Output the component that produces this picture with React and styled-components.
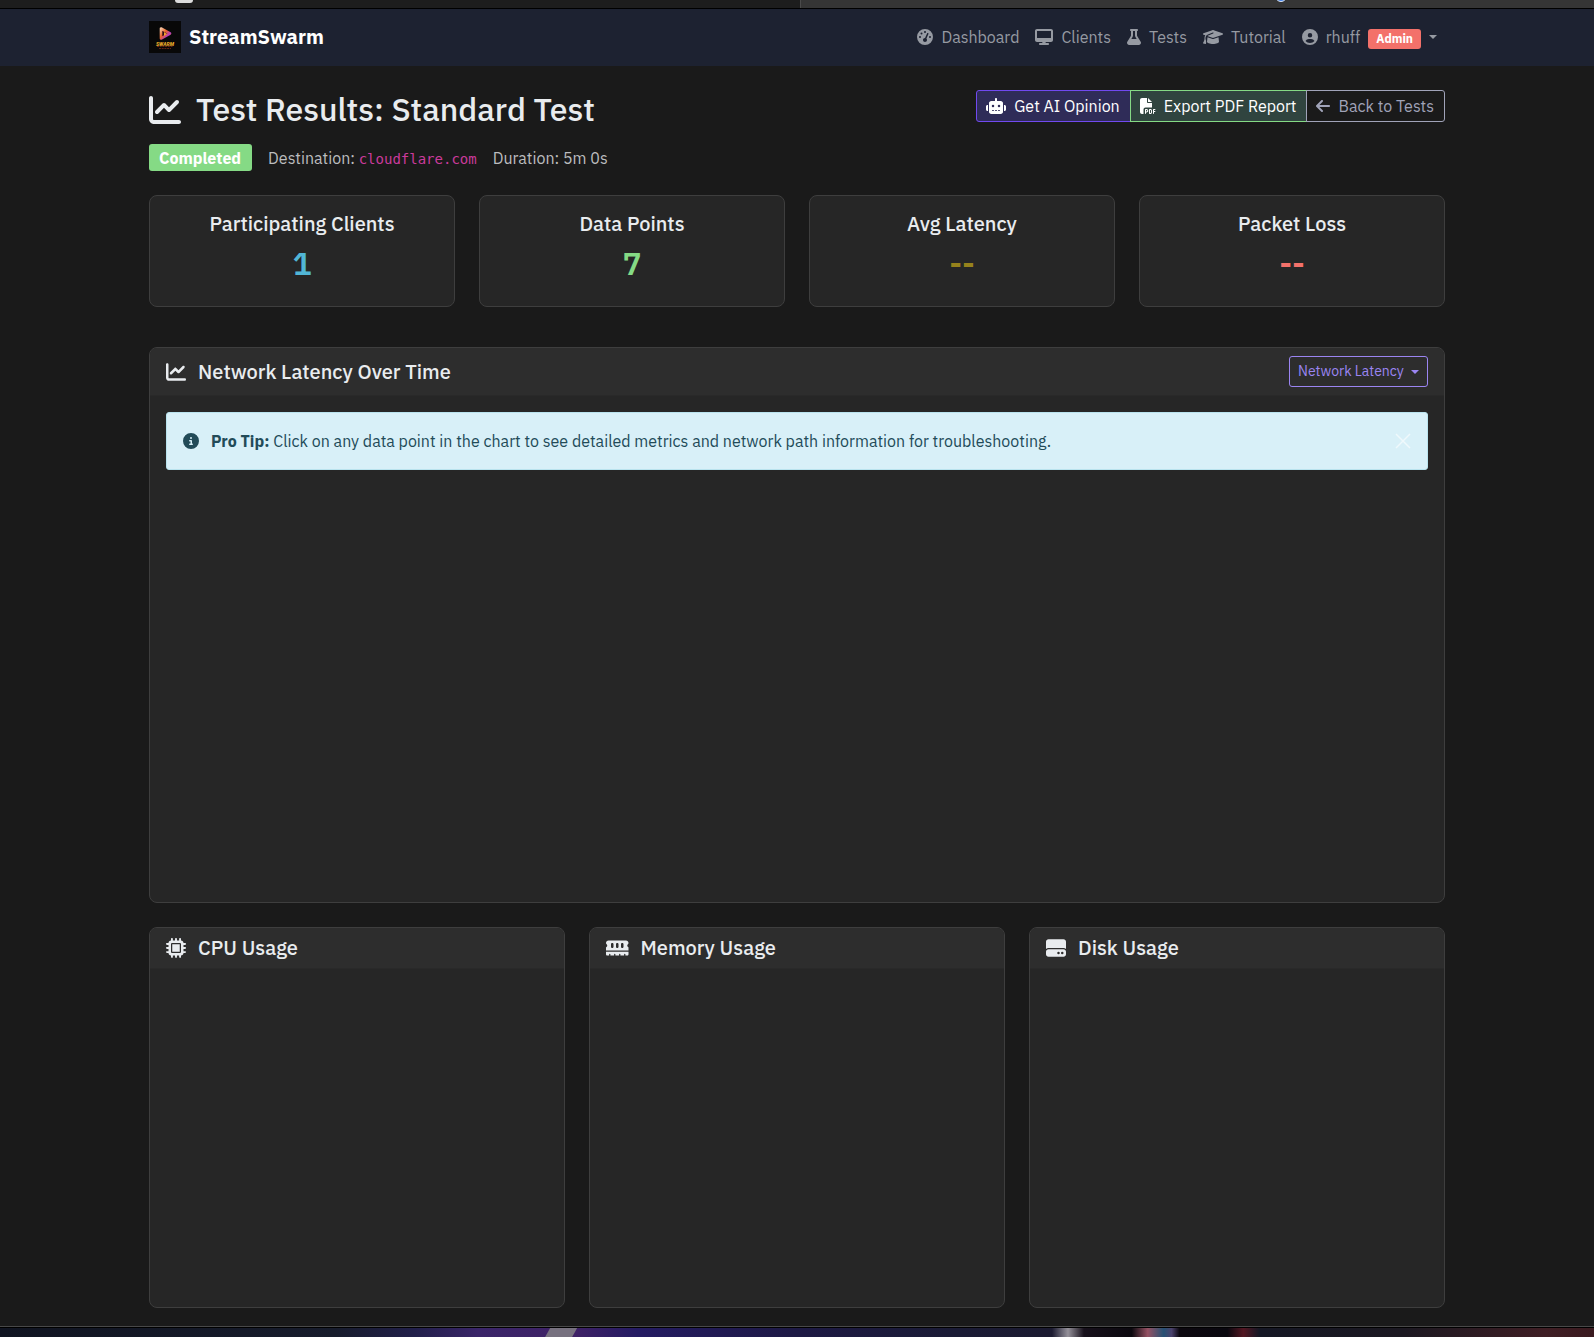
import React from "react";
import styled, { createGlobalStyle, css } from "styled-components";
import {
  FaArrowLeft,
  FaChartLine,
  FaCircleInfo,
  FaCircleUser,
  FaDesktop,
  FaFilePdf,
  FaFlask,
  FaGaugeHigh,
  FaGraduationCap,
  FaHardDrive,
  FaMemory,
  FaMicrochip,
  FaRobot,
} from "react-icons/fa6";

const GlobalStyle = createGlobalStyle`
  *, *::before, *::after { box-sizing: border-box; }
  body {
    margin: 0;
    background: #1a1a1a;
    color: #e9ecef;
    font-family: "IBM Plex Sans", Roboto, "Liberation Sans", sans-serif;
    font-size: 16px;
    line-height: 24px;
  }
  h1, h2, p { margin: 0; }
  button, select { font: inherit; cursor: pointer; }
  svg { display: block; flex: none; }
  svg[viewBox="0 0 448 512"] { width: 0.875em; }
  svg[viewBox="0 0 576 512"] { width: 1.125em; }
  svg[viewBox="0 0 640 512"] { width: 1.25em; }
`;

const Page = styled.div`
  display: flex;
  flex-direction: column;
  min-height: 100vh;
`;

const WindowEdge = styled.div`
  display: grid;
  grid-template-columns: 800px 1fr;
  height: 9px;
  border-bottom: 1px solid #000;
`;

const EdgePart = styled.div`
  background: ${(p) => p.$color};
  padding-left: ${(p) => p.$inset}px;
  border-left: ${(p) => (p.$divided ? "1px solid #4a4a4a" : "none")};
  overflow: hidden;
`;

const NavBar = styled.nav`
  background: #1d2231;
  padding: 12px 0 13px;
`;

const Container = styled.div`
  width: 100%;
  max-width: 1320px;
  margin: 0 auto;
  padding: 0 12px;
`;

const NavRow = styled(Container)`
  display: flex;
  align-items: center;
  justify-content: space-between;
`;

const Brand = styled.a`
  display: flex;
  align-items: center;
  gap: 8px;
  color: #fff;
  font-size: 20px;
  font-weight: 700;
  line-height: 32px;
  text-decoration: none;
`;

const NavLinks = styled.div`
  display: flex;
  align-items: center;
  gap: 16px;
  padding-right: 8px;
`;

const navItem = css`
  display: flex;
  align-items: center;
  gap: 8px;
  color: #969aa2;
  text-decoration: none;
`;

const NavLink = styled.a`
  ${navItem}
`;

const UserButton = styled.button`
  ${navItem}
  padding: 0;
  border: 0;
  background: none;
`;

const RoleBadge = styled.span`
  margin-top: 3px;
  padding: 0 8px;
  border-radius: 3px;
  background: #f3716a;
  color: #fff;
  font-size: 12px;
  font-weight: 700;
  line-height: 20px;
`;

const Caret = styled.span`
  border-top: 4px solid currentColor;
  border-left: 4px solid transparent;
  border-right: 4px solid transparent;
`;

const Main = styled(Container).attrs({ as: "main" })`
  flex: 1;
  padding-top: 24px;
  padding-bottom: 18px;
`;

const PageHead = styled.header`
  display: flex;
  align-items: flex-start;
  justify-content: space-between;
  margin-bottom: 24px;
`;

const Title = styled.h1`
  display: flex;
  align-items: center;
  gap: 15px;
  margin-bottom: 15px;
  font-size: 32px;
  font-weight: 500;
  line-height: 39px;
`;

const MetaRow = styled.div`
  display: flex;
  align-items: center;
  gap: 16px;
  color: #bcbdbf;
`;

const StatusBadge = styled.span`
  padding: 1px 11px 0 10px;
  border-radius: 3px;
  background: #85da85;
  color: #fff;
  font-weight: 700;
  line-height: 26px;
`;

const Host = styled.code`
  color: #cb3a9c;
  font-family: "DejaVu Sans Mono", monospace;
  font-size: 14px;
  line-height: 14px;
`;

const ButtonGroup = styled.div`
  display: flex;
`;

const tones = {
  ai: css`
    border-color: #7149f0;
    background: #2f2c58;
    color: #fff;
  `,
  pdf: css`
    border-color: #85da85;
    background: #30443f;
    color: #fff;
  `,
  back: css`
    border-color: #a0a3b8;
    background: transparent;
    color: #a0a3b8;
  `,
};

const action = css`
  display: flex;
  align-items: center;
  gap: 8px;
  padding: 3px 10px 3px 9px;
  border: 1px solid;
  line-height: 24px;
  white-space: nowrap;
  text-decoration: none;
  ${(p) => tones[p.$tone]}
  &:first-child { border-radius: 3px 0 0 3px; }
  &:last-child { border-radius: 0 3px 3px 0; }
  & + & { margin-left: -1px; }
`;

const ActionButton = styled.button`
  ${action}
`;

const ActionLink = styled.a`
  ${action}
  margin-left: -1px;
`;

const Columns = styled.section`
  display: grid;
  grid-template-columns: repeat(${(p) => p.$count}, 1fr);
  gap: 24px;
`;

const Card = styled.section`
  border: 1px solid #3e3e3e;
  border-radius: 8px;
  background: #262626;
  overflow: hidden;
`;

const StatCard = styled(Card)`
  padding: 16px 16px 24px;
  text-align: center;
`;

const StatTitle = styled.h2`
  margin-bottom: 8px;
  font-size: 20px;
  font-weight: 500;
  line-height: 24px;
`;

const StatValue = styled.p`
  color: ${(p) => p.$color};
  font-size: 32px;
  font-weight: 600;
  line-height: 38px;
`;

const ChartCard = styled(Card)`
  margin: 40px 0 24px;
`;

const CardHead = styled.header`
  display: flex;
  align-items: center;
  justify-content: space-between;
  padding: 8px 16px;
  border-bottom: 1px solid #292929;
  background: #2d2d2d;
`;

const CardTitle = styled.h2`
  display: flex;
  align-items: center;
  gap: 12px;
  font-size: 20px;
  font-weight: 500;
  line-height: 24px;
`;

const MetricPicker = styled.label`
  position: relative;
  display: flex;
  color: #9b85f2;

  ${Caret} {
    position: absolute;
    top: 14px;
    right: 9px;
    pointer-events: none;
  }
`;

const MetricSelect = styled.select`
  appearance: none;
  padding: 4px 23px 4px 8px;
  border: 1px solid #9b85f2;
  border-radius: 3px;
  background: transparent;
  color: inherit;
  font-size: 14px;
  line-height: 21px;
`;

const CardBody = styled.div`
  padding: 16px;
`;

const Tip = styled.div`
  display: flex;
  align-items: center;
  gap: 12px;
  padding: 16px;
  border: 1px solid #b9e3ee;
  border-radius: 3px;
  background: #d8f0f8;
  color: #224b58;
`;

const TipText = styled.p`
  flex: 1;
`;

const CloseButton = styled.button`
  padding: 0;
  border: 0;
  background: none;
  color: #fff;
  opacity: 0.6;
`;

const Plot = styled.div`
  height: ${(p) => p.$height}px;
  margin-top: ${(p) => p.$gap || 0}px;
`;

const Wallpaper = styled.footer`
  height: 11px;
  border-top: 1px solid #484848;
  box-shadow: inset 0 1px #000;
  background: linear-gradient(
    90deg,
    #101421 0%, #171c2c 21%, #211f4a 26%, #3a2569 30%, #3f2166 36%,
    #241b63 40%, #1d1944 50%, #1a1b35 60%, #1b1a30 66%, #949099 67%,
    #17101b 68%, #0b080e 71%, #955163 72%, #265174 73%, #4b426d 73.5%,
    #0c080f 74%, #09070e 77%, #531622 78%, #151724 79%, #1b1821 88%,
    #3f1e24 97%, #3a1a1f 100%
  );
`;

const Beam = styled.div`
  width: 32px;
  height: 9px;
  margin: 1px 0 0 34.2%;
  background: #77717f;
  clip-path: polygon(5px 0, 100% 0, 27px 100%, 0 100%);
`;

function Logo() {
  return (
    <svg width="32" height="32" viewBox="0 0 32 32" aria-hidden="true">
      <defs>
        <linearGradient id="flame" x1="0" y1="0" x2="1" y2="1">
          <stop offset="0" stopColor="#f4c3a0" />
          <stop offset="0.4" stopColor="#ed6427" />
          <stop offset="0.75" stopColor="#b43bc0" />
          <stop offset="1" stopColor="#f08a28" />
        </linearGradient>
      </defs>
      <rect width="32" height="32" fill="#080808" />
      <path
        d="M12 7.5v10l9-5z"
        fill="#2c0d18"
        stroke="url(#flame)"
        strokeWidth="2.6"
        strokeLinejoin="round"
      />
      <path d="M15 11v4l3-2z" fill="#f4a12e" />
      <text x="16" y="24.5" textAnchor="middle" fontFamily="Roboto, sans-serif" fontSize="5" fontWeight="900" fontStyle="italic" fill="#e9a92a">
        SWARM
      </text>
      <path d="M8 25.5h16M10 27.500h12" stroke="#7d2a14" strokeWidth="0.8" strokeDasharray="2 0.7" />
    </svg>
  );
}

const navLinks = [
  { label: "Dashboard", Icon: FaGaugeHigh },
  { label: "Clients", Icon: FaDesktop },
  { label: "Tests", Icon: FaFlask },
  { label: "Tutorial", Icon: FaGraduationCap },
];

const stats = [
  { title: "Participating Clients", value: "1", color: "#51b6d6" },
  { title: "Data Points", value: "7", color: "#85da85" },
  { title: "Avg Latency", value: "--", color: "#96821c" },
  { title: "Packet Loss", value: "--", color: "#f3716a" },
];

const usage = [
  { title: "CPU Usage", Icon: FaMicrochip },
  { title: "Memory Usage", Icon: FaMemory },
  { title: "Disk Usage", Icon: FaHardDrive },
];

export default function App() {
  return (
    <Page>
      <GlobalStyle />
      <WindowEdge>
        <EdgePart $color="#1d1d1d" $inset={175}>
          <svg width="18" height="3" aria-hidden="true">
            <path d="M0 0h18q0 3-3 3H3q-3 0-3-3z" fill="#dcdcdc" />
          </svg>
        </EdgePart>
        <EdgePart $color="#353535" $inset={474} $divided>
          <svg width="12" height="3" aria-hidden="true">
            <circle cx="6" cy="-4" r="5.500" fill="#3d7de8" stroke="#dce7f7" strokeWidth="1" />
          </svg>
        </EdgePart>
      </WindowEdge>

      <NavBar>
        <NavRow>
          <Brand href="#">
            <Logo />
            StreamSwarm
          </Brand>
          <NavLinks>
            {navLinks.map(({ label, Icon }) => (
              <NavLink href="#" key={label}>
                <Icon />
                {label}
              </NavLink>
            ))}
            <UserButton type="button">
              <FaCircleUser />
              rhuff
              <RoleBadge>Admin</RoleBadge>
              <Caret />
            </UserButton>
          </NavLinks>
        </NavRow>
      </NavBar>

      <Main>
        <PageHead>
          <div>
            <Title>
              <FaChartLine />
              Test Results: Standard Test
            </Title>
            <MetaRow>
              <StatusBadge>Completed</StatusBadge>
              <span>
                Destination: <Host>cloudflare.com</Host>
              </span>
              <span>Duration: 5m 0s</span>
            </MetaRow>
          </div>
          <ButtonGroup>
            <ActionButton type="button" $tone="ai">
              <FaRobot />
              Get AI Opinion
            </ActionButton>
            <ActionButton type="button" $tone="pdf">
              <FaFilePdf />
              Export PDF Report
            </ActionButton>
            <ActionLink href="#" $tone="back">
              <FaArrowLeft />
              Back to Tests
            </ActionLink>
          </ButtonGroup>
        </PageHead>

        <Columns $count={4}>
          {stats.map((s) => (
            <StatCard key={s.title}>
              <StatTitle>{s.title}</StatTitle>
              <StatValue $color={s.color}>{s.value}</StatValue>
            </StatCard>
          ))}
        </Columns>

        <ChartCard>
          <CardHead>
            <CardTitle>
              <FaChartLine />
              Network Latency Over Time
            </CardTitle>
            <MetricPicker>
              <MetricSelect aria-label="Chart metric" defaultValue="latency">
                <option value="latency">Network Latency</option>
              </MetricSelect>
              <Caret />
            </MetricPicker>
          </CardHead>
          <CardBody>
            <Tip>
              <FaCircleInfo />
              <TipText>
                <strong>Pro Tip:</strong> Click on any data point in the chart to see detailed
                metrics and network path information for troubleshooting.
              </TipText>
              <CloseButton type="button" aria-label="Close">
                <svg width="16" height="16" viewBox="0 0 16 16">
                  <path d="M1 1l14 14M15 1L1 15" stroke="currentColor" strokeWidth="1.5" />
                </svg>
              </CloseButton>
            </Tip>
            <Plot $height={400} $gap={16} />
          </CardBody>
        </ChartCard>

        <Columns $count={3}>
          {usage.map(({ title, Icon }) => (
            <Card key={title}>
              <CardHead>
                <CardTitle>
                  <Icon />
                  {title}
                </CardTitle>
              </CardHead>
              <CardBody>
                <Plot $height={306} />
              </CardBody>
            </Card>
          ))}
        </Columns>
      </Main>

      <Wallpaper>
        <Beam />
      </Wallpaper>
    </Page>
  );
}
